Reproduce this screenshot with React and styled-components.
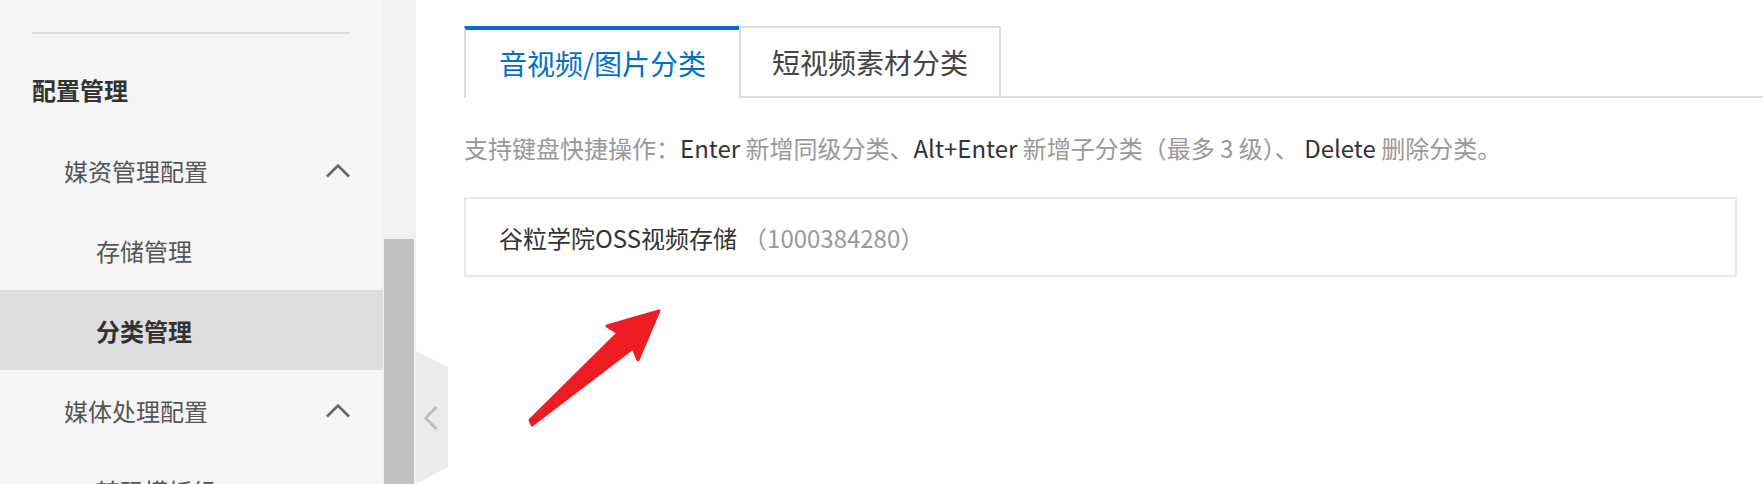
import React from "react";
import styled, { createGlobalStyle } from "styled-components";

const GlobalStyle = createGlobalStyle`
  html, body {
    margin: 0;
    padding: 0;
    height: 100%;
  }
  body {
    font-family: "Noto Sans CJK SC", "Noto Sans", sans-serif;
    background: #fff;
    overflow: hidden;
  }
`;

const Page = styled.div`
  position: relative;
  display: flex;
  height: 484px;
  overflow: hidden;
`;

const Sidebar = styled.aside`
  width: 383px;
  flex-shrink: 0;
  background: #f5f5f5;
  overflow: hidden;
`;

const Divider = styled.div`
  margin: 32px 0 0 32px;
  width: 318px;
  height: 2px;
  background: #dcdcdc;
`;

const GroupTitle = styled.div`
  margin-top: 16px;
  height: 80px;
  line-height: 80px;
  padding-left: 32px;
  font-size: 24px;
  font-weight: 700;
  color: #333;
`;

const MenuItem = styled.div`
  display: flex;
  align-items: center;
  justify-content: space-between;
  height: 80px;
  padding: 0 33px 0 ${({ level }) => (level === 2 ? 96 : 64)}px;
  font-size: 24px;
  color: ${({ active }) => (active ? "#333" : "#555")};
  font-weight: ${({ active }) => (active ? 700 : 400)};
  background: ${({ active }) => (active ? "#dddddd" : "transparent")};
`;

const ScrollTrack = styled.div`
  width: 33px;
  flex-shrink: 0;
  display: flex;
  flex-direction: column;
  padding: 239px 2px 0 1px;
  box-sizing: border-box;
  background: #f1f1f1;
`;

const ScrollThumb = styled.div`
  flex: 1;
  background: #c1c1c1;
`;

const Main = styled.main`
  position: relative;
  flex: 1;
  padding: 26px 26px 0 48px;
  background: #fff;
`;

const TabBar = styled.div`
  display: flex;
  margin-right: -26px;
  border-bottom: 2px solid #ddd;
`;

const Tab = styled.div`
  box-sizing: border-box;
  display: flex;
  align-items: center;
  justify-content: center;
  padding: 0 ${({ active }) => (active ? 33 : 31)}px ${({ active }) => (active ? 2 : 0)}px;
  height: ${({ active }) => (active ? 72 : 70)}px;
  margin-bottom: ${({ active }) => (active ? -2 : 0)}px;
  font-size: 28px;
  background: #fff;
  color: ${({ active }) => (active ? "#0070cc" : "#444")};
  border-top: ${({ active }) => (active ? "4px solid #0070cc" : "2px solid #ddd")};
  border-left: 2px solid #ddd;
  border-right: ${({ active }) => (active ? "none" : "2px solid #ddd")};
`;

const Hint = styled.p`
  margin: 32px 0 0;
  font-size: 24px;
  line-height: 36px;
  color: #999;
  white-space: nowrap;
`;

const Key = styled.span`
  color: #333;
`;

const Card = styled.div`
  box-sizing: border-box;
  display: flex;
  align-items: center;
  margin-top: 31px;
  height: 80px;
  padding-left: 33px;
  border: 2px solid #e8e8e8;
  font-size: 24px;
  color: #333;
`;

const CardId = styled.span`
  margin-left: 6px;
  color: #999;
`;

const CollapseHandle = styled.div`
  position: absolute;
  left: 0;
  top: 351px;
  width: 32px;
  height: 133px;
  display: flex;
  align-items: center;
  justify-content: center;
  padding-right: 3px;
  box-sizing: border-box;
  background: #ebebeb;
  clip-path: polygon(0 0, 100% 16px, 100% 116px, 0 100%);
`;

const Arrow = styled.svg`
  position: absolute;
  left: 520px;
  top: 300px;
`;

const ChevronUp = () => (
  <svg width="24" height="15" viewBox="0 0 24 15">
    <polyline points="1,13.5 12,2.5 23,13.5" fill="none" stroke="#666" strokeWidth="2.6" />
  </svg>
);

const menu = [
  { label: "媒资管理配置", level: 1, expand: true },
  { label: "存储管理", level: 2 },
  { label: "分类管理", level: 2, active: true },
  { label: "媒体处理配置", level: 1, expand: true },
  { label: "转码模板组", level: 2 },
];

export default function App() {
  return (
    <Page>
      <GlobalStyle />
      <Sidebar>
        <Divider />
        <GroupTitle>配置管理</GroupTitle>
        {menu.map((m) => (
          <MenuItem key={m.label} level={m.level} active={m.active}>
            <span>{m.label}</span>
            {m.expand && <ChevronUp />}
          </MenuItem>
        ))}
      </Sidebar>
      <ScrollTrack>
        <ScrollThumb />
      </ScrollTrack>
      <Main>
        <TabBar>
          <Tab active>音视频/图片分类</Tab>
          <Tab>短视频素材分类</Tab>
        </TabBar>
        <Hint>
          支持键盘快捷操作：<Key>Enter</Key> 新增同级分类、<Key>Alt+Enter</Key> 新增子分类（最多 3 级）、{" "}
          <Key>Delete</Key> 删除分类。
        </Hint>
        <Card>
          谷粒学院OSS视频存储
          <CardId>（1000384280）</CardId>
        </Card>
        <CollapseHandle>
          <svg width="14" height="24" viewBox="0 0 14 24">
            <polyline points="12.5,1 1.5,12 12.5,23" fill="none" stroke="#bbb" strokeWidth="2.6" />
          </svg>
        </CollapseHandle>
      </Main>
      <Arrow width="150" height="135" viewBox="0 0 150 135">
        <polygon
          points="139,11 87,26 98,33 10,120 12,125 113,48 118,60"
          fill="#ee1c25"
          stroke="#ee1c25"
          strokeWidth="3"
          strokeLinejoin="round"
        />
      </Arrow>
    </Page>
  );
}
